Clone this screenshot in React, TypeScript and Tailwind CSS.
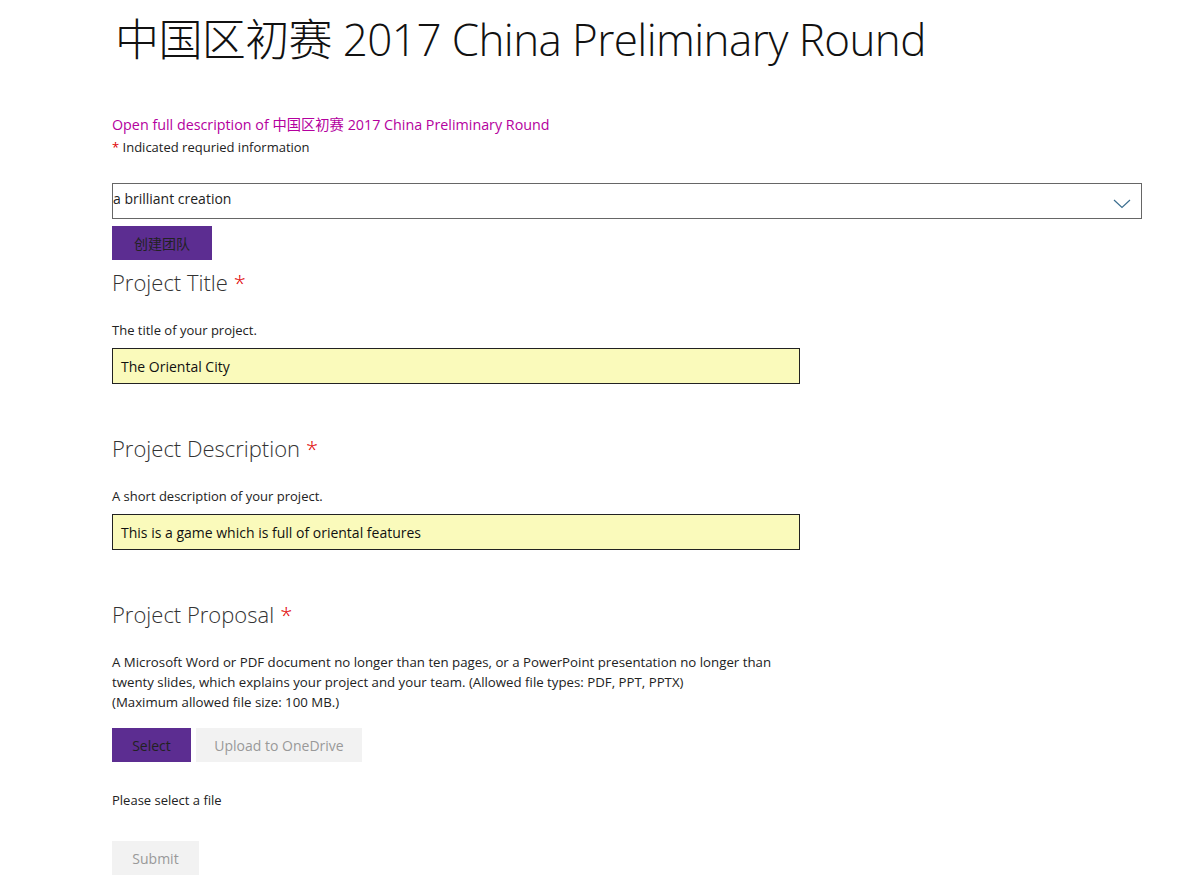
import React from "react";

const font = { fontFamily: '"Open Sans", "Noto Sans CJK SC", sans-serif' };

function Star() {
  return <span className="text-[#e00000] ml-[6px]">*</span>;
}

export default function App() {
  return (
    <div className="bg-white min-h-[894px] text-[#222]" style={font}>
      <div className="pl-[112px] pr-[36px]">
        <h1 className="text-[44px] leading-[60px] font-light text-[#111] pt-[9px] pl-[3px] tracking-[-0.6px]">
          中国区初赛 2017 China Preliminary Round
        </h1>
        <div className="mt-[46px] text-[14.3px] leading-[20px] text-[#b4009e]">
          Open full description of 中国区初赛 2017 China Preliminary Round
        </div>
        <div className="mt-[2px] text-[13px] leading-[20px] text-[#222]">
          <span className="text-[#e00000]">*</span> Indicated requried information
        </div>
        <div className="mt-[26px] h-[36px] border border-[#666] flex items-center justify-between pr-[10px]">
          <span className="text-[14px] text-[#222] pb-[5px]">a brilliant creation</span>
          <svg width="18" height="10" viewBox="0 0 18 10" className="mt-[6px]">
            <path d="M1 1 L9 8.5 L17 1" fill="none" stroke="#3b6e8f" strokeWidth="1.2" />
          </svg>
        </div>
        <button className="mt-[7px] w-[100px] h-[34px] bg-[#5c2d91] text-[14px] text-[#222] block">
          创建团队
        </button>

        <h2 className="mt-[5px] text-[22px] leading-[34px] font-light text-[#333]">
          Project Title<Star />
        </h2>
        <div className="mt-[21px] text-[13px] leading-[20px]">The title of your project.</div>
        <div className="mt-[8px] w-[688px] h-[36px] bg-[#fafabb] border border-[#222] flex items-center pl-[8px] text-[14px] text-[#111]">
          The Oriental City
        </div>

        <h2 className="mt-[47px] text-[22px] leading-[34px] font-light text-[#333]">
          Project Description<Star />
        </h2>
        <div className="mt-[21px] text-[13px] leading-[20px]">A short description of your project.</div>
        <div className="mt-[8px] w-[688px] h-[36px] bg-[#fafabb] border border-[#222] flex items-center pl-[8px] text-[14px] text-[#111]">
          This is a game which is full of oriental features
        </div>

        <h2 className="mt-[47px] text-[22px] leading-[34px] font-light text-[#333]">
          Project Proposal<Star />
        </h2>
        <div className="mt-[21px] text-[13.25px] leading-[20px] w-[700px]">
          A Microsoft Word or PDF document no longer than ten pages, or a PowerPoint presentation no longer than
          <br />
          twenty slides, which explains your project and your team. (Allowed file types: PDF, PPT, PPTX)
          <br />
          (Maximum allowed file size: 100 MB.)
        </div>
        <div className="mt-[16px] flex gap-[5px]">
          <button className="w-[79px] h-[34px] bg-[#5c2d91] text-[14px] text-[#222]">Select</button>
          <button className="w-[166px] h-[34px] bg-[#f2f2f2] text-[14px] text-[#999]">Upload to OneDrive</button>
        </div>
        <div className="mt-[28px] text-[13px] leading-[20px]">Please select a file</div>
        <button className="mt-[31px] w-[87px] h-[34px] bg-[#f2f2f2] text-[14px] text-[#999] block">Submit</button>
      </div>
    </div>
  );
}
